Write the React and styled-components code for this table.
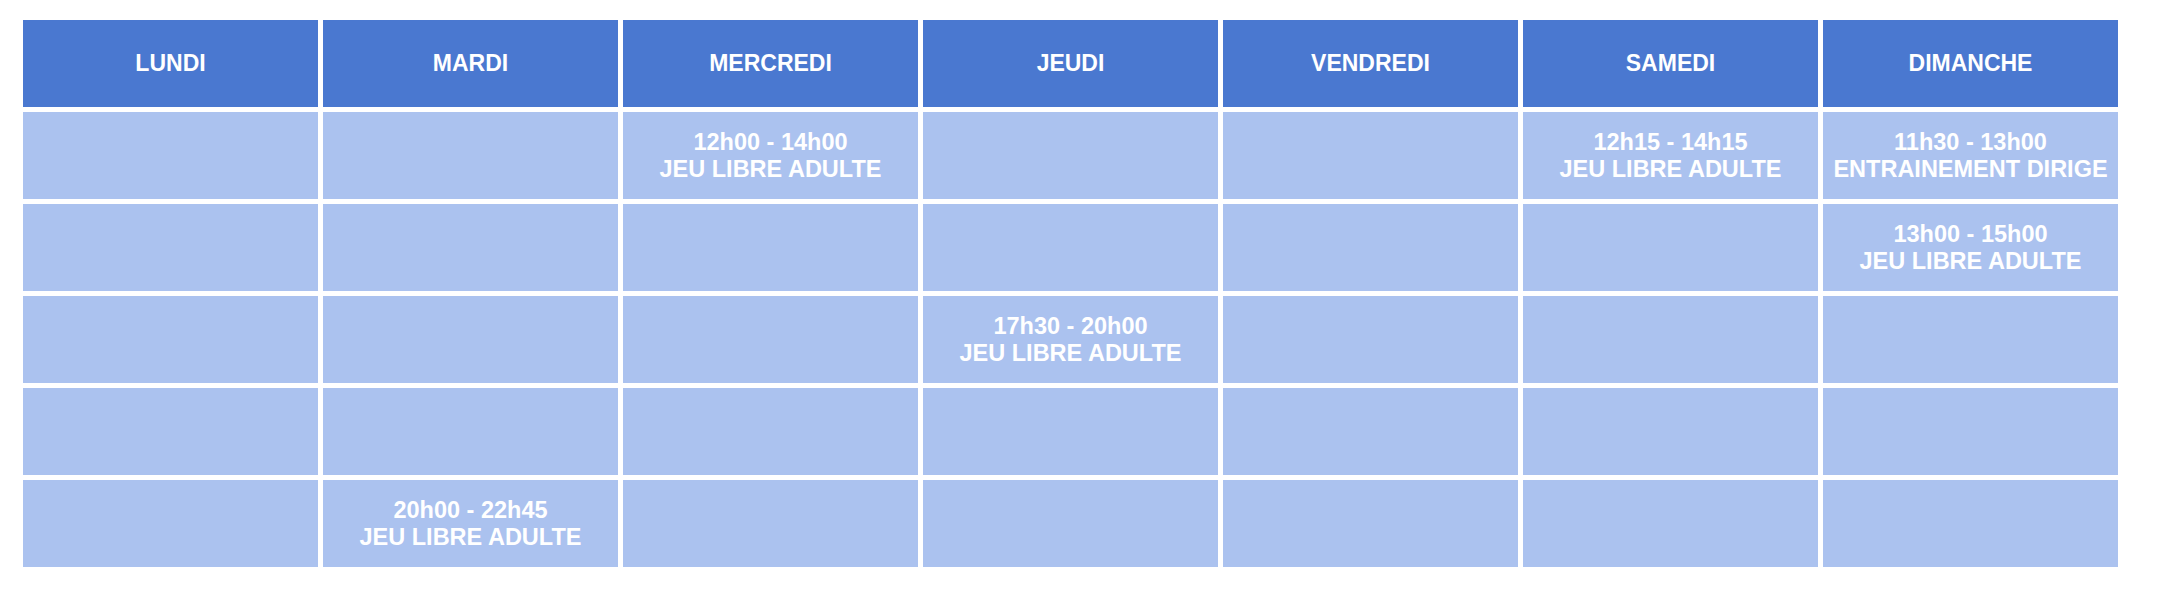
import React from "react";
import styled, { createGlobalStyle } from "styled-components";

const GlobalStyle = createGlobalStyle`
  html, body { margin: 0; padding: 0; background: #ffffff; }
  body { font-family: "Liberation Sans", Arial, sans-serif; }
`;

const Page = styled.div`
  padding: 20px 0 0 23px;
`;

const Schedule = styled.div`
  display: grid;
  grid-template-columns: repeat(7, 295px);
  grid-auto-rows: 87px;
  gap: 5px;
`;

const Cell = styled.div`
  display: flex;
  flex-direction: column;
  align-items: center;
  justify-content: center;
  text-align: center;
  background: ${(p) => (p.$header ? "#4a78d0" : "#abc2ef")};
  color: #ffffff;
  font-weight: 700;
  font-size: 23.5px;
  line-height: 27px;
  white-space: nowrap;
`;

const HeaderLabel = styled.span`
  font-size: 23px;
`;

const days = ["LUNDI", "MARDI", "MERCREDI", "JEUDI", "VENDREDI", "SAMEDI", "DIMANCHE"];

const slots = {
  "0-2": ["12h00 - 14h00", "JEU LIBRE ADULTE"],
  "0-5": ["12h15 - 14h15", "JEU LIBRE ADULTE"],
  "0-6": ["11h30 - 13h00", "ENTRAINEMENT DIRIGE"],
  "1-6": ["13h00 - 15h00", "JEU LIBRE ADULTE"],
  "2-3": ["17h30 - 20h00", "JEU LIBRE ADULTE"],
  "4-1": ["20h00 - 22h45", "JEU LIBRE ADULTE"],
};

export default function App() {
  return (
    <Page>
      <GlobalStyle />
      <Schedule>
        {days.map((d) => (
          <Cell key={d} $header>
            <HeaderLabel>{d}</HeaderLabel>
          </Cell>
        ))}
        {Array.from({ length: 5 }).map((_, r) =>
          days.map((d, c) => {
            const s = slots[`${r}-${c}`];
            return (
              <Cell key={`${r}-${c}`}>
                {s && (
                  <>
                    <span>{s[0]}</span>
                    <span>{s[1]}</span>
                  </>
                )}
              </Cell>
            );
          })
        )}
      </Schedule>
    </Page>
  );
}
